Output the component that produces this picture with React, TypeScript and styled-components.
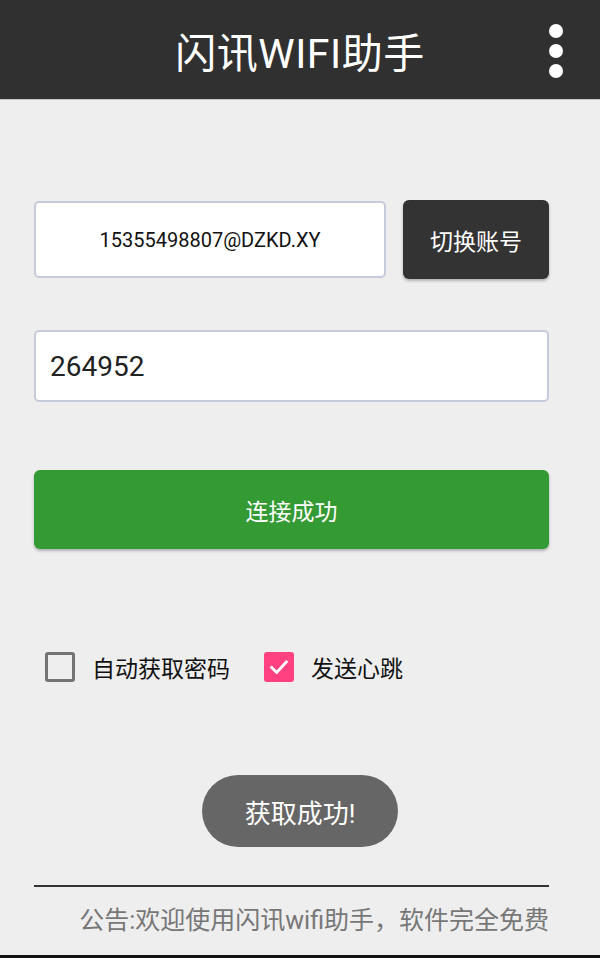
import { useState } from "react";
import styled, { createGlobalStyle } from "styled-components";

const GlobalStyle = createGlobalStyle`
  html, body {
    margin: 0;
    padding: 0;
    background: #eeeeee;
  }
  body {
    font-family: Roboto, "Noto Sans CJK SC", sans-serif;
  }
`;

const Screen = styled.div`
  width: 600px;
  height: 958px;
  box-sizing: border-box;
  display: flex;
  flex-direction: column;
  background: #eeeeee;
  border-bottom: 3px solid #111;
  overflow: hidden;
`;

const ActionBar = styled.header`
  position: relative;
  height: 100px;
  flex-shrink: 0;
  display: flex;
  align-items: center;
  justify-content: center;
  background: #303030;
  border-bottom: 1px solid #c4c4c4;
  box-sizing: border-box;
`;

const Title = styled.h1`
  margin: 0;
  color: #fff;
  font-size: 41px;
  font-weight: 400;
  letter-spacing: 0.5px;
`;

const MenuButton = styled.div`
  position: absolute;
  right: 37px;
  top: 24px;
  display: flex;
  flex-direction: column;
  gap: 6px;
`;

const MenuDot = styled.span`
  width: 14px;
  height: 14px;
  border-radius: 50%;
  background: #fff;
`;

const Content = styled.main`
  flex: 1;
  display: flex;
  flex-direction: column;
  padding: 100px 51px 0 34px;
`;

const AccountRow = styled.div`
  display: flex;
  align-items: center;
  gap: 17px;
  height: 79px;
`;

const Field = styled.div<{ centered?: boolean; big?: boolean }>`
  box-sizing: border-box;
  display: flex;
  align-items: center;
  justify-content: ${(p) => (p.centered ? "center" : "flex-start")};
  background: #fff;
  border: 2px solid #c5cbdb;
  border-radius: 5px;
  padding: 0 14px;
  color: ${(p) => (p.big ? "#222" : "#111")};
  font-size: ${(p) => (p.big ? "28px" : "20px")};
`;

const AccountField = styled(Field)`
  flex: 1;
  height: 77px;
`;

const PasswordField = styled(Field)`
  margin-top: 51px;
  height: 72px;
`;

const RaisedButton = styled.button<{ bg: string }>`
  border: none;
  border-radius: 6px;
  background: ${(p) => p.bg};
  color: #fff;
  font-family: inherit;
  font-size: 23px;
  box-shadow: 0 2px 3px rgba(0, 0, 0, 0.25);
  cursor: pointer;
`;

const SwitchButton = styled(RaisedButton)`
  width: 146px;
  height: 79px;
`;

const ConnectButton = styled(RaisedButton)`
  margin-top: 68px;
  height: 79px;
  width: 100%;
`;

const OptionRow = styled.div`
  margin-top: 103px;
  padding-left: 11px;
  display: flex;
  align-items: center;
  height: 30px;
`;

const Option = styled.label`
  display: flex;
  align-items: center;
  gap: 17px;
  margin-right: 34px;
  font-size: 23px;
  color: #111;
  cursor: pointer;
`;

const Box = styled.span<{ checked: boolean }>`
  box-sizing: border-box;
  width: 30px;
  height: 30px;
  border-radius: 3px;
  display: flex;
  align-items: center;
  justify-content: center;
  background: ${(p) => (p.checked ? "#ff4081" : "transparent")};
  border: ${(p) => (p.checked ? "none" : "3.5px solid #737373")};
`;

const PillRow = styled.div`
  margin-top: 93px;
  display: flex;
  justify-content: center;
`;

const PillButton = styled.button`
  width: 196px;
  height: 72px;
  border: none;
  border-radius: 36px;
  background: #666666;
  color: #fff;
  font-family: inherit;
  font-size: 26px;
  margin-left: 17px;
`;

const Divider = styled.hr`
  margin: 38px 0 0;
  border: none;
  height: 2px;
  background: #333;
`;

const Notice = styled.p`
  margin: 19px 0 0;
  text-align: right;
  color: #777;
  font-size: 25px;
  line-height: 30px;
  white-space: nowrap;
`;

const Check = () => (
  <svg width="22" height="22" viewBox="0 0 24 24">
    <path
      d="M4 12.5 L9.5 18 L20 6.5"
      fill="none"
      stroke="#fff"
      strokeWidth="3.2"
      strokeLinecap="square"
    />
  </svg>
);

const App = () => {
  const [autoPwd, setAutoPwd] = useState(false);
  const [heartbeat, setHeartbeat] = useState(true);

  return (
    <>
      <GlobalStyle />
      <Screen>
        <ActionBar>
          <Title>闪讯WIFI助手</Title>
          <MenuButton>
            <MenuDot />
            <MenuDot />
            <MenuDot />
          </MenuButton>
        </ActionBar>
        <Content>
          <AccountRow>
            <AccountField centered>15355498807@DZKD.XY</AccountField>
            <SwitchButton bg="#333333">切换账号</SwitchButton>
          </AccountRow>
          <PasswordField big>264952</PasswordField>
          <ConnectButton bg="#349a33">连接成功</ConnectButton>
          <OptionRow>
            <Option onClick={() => setAutoPwd(!autoPwd)}>
              <Box checked={autoPwd}>{autoPwd && <Check />}</Box>
              自动获取密码
            </Option>
            <Option onClick={() => setHeartbeat(!heartbeat)}>
              <Box checked={heartbeat}>{heartbeat && <Check />}</Box>
              发送心跳
            </Option>
          </OptionRow>
          <PillRow>
            <PillButton>获取成功!</PillButton>
          </PillRow>
          <Divider />
          <Notice>公告:欢迎使用闪讯wifi助手，软件完全免费</Notice>
        </Content>
      </Screen>
    </>
  );
};

export default App;
